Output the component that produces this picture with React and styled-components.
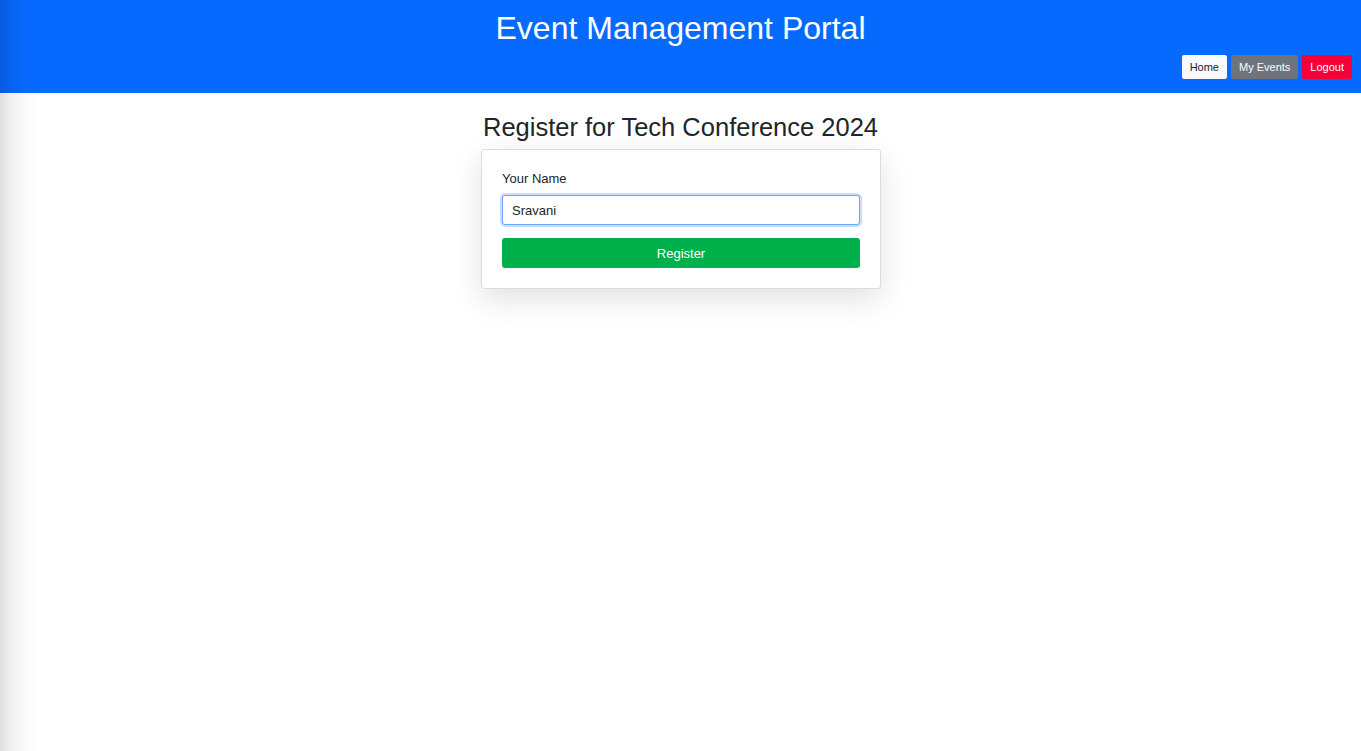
import React, { useState } from "react";
import styled, { createGlobalStyle } from "styled-components";

const GlobalStyle = createGlobalStyle`
  html, body {
    margin: 0;
    padding: 0;
    background: #ffffff;
    font-family: "Liberation Sans", Arial, sans-serif;
  }
  * {
    box-sizing: border-box;
  }
`;

function App() {
  const [name, setName] = useState("Sravani");

  return (
    <Page>
      <GlobalStyle />
      <EdgeShade />
      <Header>
        <Title>Event Management Portal</Title>
        <Nav>
          <NavButton variant="light">Home</NavButton>
          <NavButton variant="grey">My Events</NavButton>
          <NavButton variant="red">Logout</NavButton>
        </Nav>
      </Header>
      <Main>
        <Heading>Register for Tech Conference 2024</Heading>
        <Card>
          <Label htmlFor="name">Your Name</Label>
          <Input
            id="name"
            value={name}
            spellCheck
            onChange={(e) => setName(e.target.value)}
          />
          <SubmitButton>Register</SubmitButton>
        </Card>
      </Main>
    </Page>
  );
}

export default App;

const Page = styled.div`
  position: relative;
  min-height: 751px;
  background: #ffffff;
`;

const EdgeShade = styled.div`
  position: fixed;
  left: 0;
  top: 0;
  bottom: 0;
  width: 40px;
  pointer-events: none;
  z-index: 5;
  background: linear-gradient(
    to right,
    rgba(0, 0, 0, 0.13),
    rgba(0, 0, 0, 0.06) 25%,
    rgba(0, 0, 0, 0.02) 60%,
    rgba(0, 0, 0, 0)
  );
`;

const Header = styled.header`
  background: #076aff;
  height: 93px;
  padding: 10px 9px 14px;
  display: flex;
  flex-direction: column;
`;

const Title = styled.h1`
  margin: 0;
  color: #ffffff;
  font-size: 32px;
  font-weight: 400;
  line-height: 37px;
  text-align: center;
`;

const Nav = styled.nav`
  display: flex;
  justify-content: flex-end;
  gap: 4px;
  margin-top: 8px;
`;

const navColors = {
  light: { bg: "#f8f9fa", fg: "#212529" },
  grey: { bg: "#6c757d", fg: "#ffffff" },
  red: { bg: "#f50038", fg: "#ffffff" },
};

const NavButton = styled.button`
  height: 24px;
  padding: 0 8px;
  border: none;
  border-radius: 2px;
  font-family: "Liberation Sans", Arial, sans-serif;
  font-size: 11px;
  background: ${(props) => navColors[props.variant].bg};
  color: ${(props) => navColors[props.variant].fg};
  cursor: pointer;
`;

const Main = styled.main`
  display: flex;
  flex-direction: column;
  align-items: center;
  padding-top: 20px;
`;

const Heading = styled.h2`
  margin: 0 0 8px;
  color: #212529;
  font-size: 25.5px;
  font-weight: 400;
  line-height: 28px;
`;

const Card = styled.form`
  width: 400px;
  margin-left: 1px;
  padding: 20px;
  border: 1px solid #dcdcdc;
  border-radius: 3px;
  background: #ffffff;
  box-shadow: 0 10px 30px rgba(0, 0, 0, 0.12);
  display: flex;
  flex-direction: column;
`;

const Label = styled.label`
  font-size: 13px;
  line-height: 18px;
  color: #212529;
`;

const Input = styled.input`
  margin-top: 7px;
  height: 30px;
  padding: 0 9px;
  border: 1px solid #6aa6ff;
  border-radius: 3px;
  box-shadow: 0 0 0 2px rgba(13, 110, 253, 0.22);
  outline: none;
  font-family: "Liberation Sans", Arial, sans-serif;
  font-size: 13px;
  color: #212529;
`;

const SubmitButton = styled.button`
  margin-top: 13px;
  height: 30px;
  border: none;
  border-radius: 3px;
  background: #00b04a;
  color: #ffffff;
  font-family: "Liberation Sans", Arial, sans-serif;
  font-size: 13px;
  cursor: pointer;
`;
